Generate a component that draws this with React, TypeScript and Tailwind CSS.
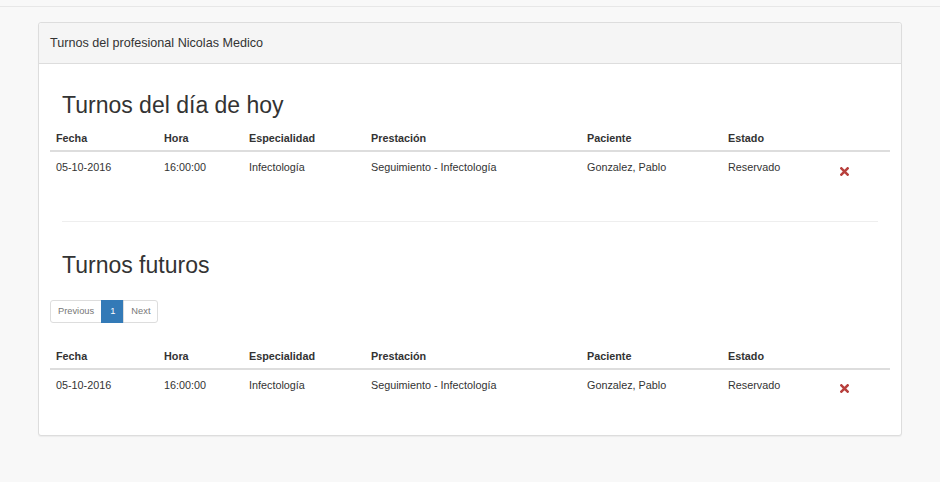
import React from "react";

const FONT = { fontFamily: '"Liberation Sans", Arial, Helvetica, sans-serif' };

function RemoveIcon() {
  return (
    <svg width="9" height="9" viewBox="0 0 10 10" className="inline-block">
      <path d="M1.5 1.5 L8.5 8.5 M8.5 1.5 L1.5 8.5" stroke="#b8403d" strokeWidth="2.8" strokeLinecap="square" fill="none" />
    </svg>
  );
}

const headers = ["Fecha", "Hora", "Especialidad", "Prestación", "Paciente", "Estado", ""];
const row = ["05-10-2016", "16:00:00", "Infectología", "Seguimiento - Infectología", "Gonzalez, Pablo", "Reservado"];

function TurnosTable({ className = "" }: { className?: string }) {
  return (
    <table className={`w-[840px] table-fixed border-collapse text-[10.8px] leading-[15px] text-[#333] ${className}`}>
      <colgroup>
        <col className="w-[108px]" />
        <col className="w-[85px]" />
        <col className="w-[122px]" />
        <col className="w-[216px]" />
        <col className="w-[141px]" />
        <col className="w-[112px]" />
        <col className="w-[56px]" />
      </colgroup>
      <thead>
        <tr>
          {headers.map((h, i) => (
            <th key={i} className="h-[27px] border-b-2 border-[#ddd] pl-[6px] pr-[6px] text-left align-bottom pb-[4px] font-bold">
              {h}
            </th>
          ))}
        </tr>
      </thead>
      <tbody>
        <tr>
          {row.map((c, i) => (
            <td key={i} className="pl-[6px] pr-[6px] pt-[8px] pb-[4px] align-top whitespace-nowrap">
              {c}
            </td>
          ))}
          <td className="pl-[6px] pt-[13px] pb-[4px] align-top leading-none">
            <RemoveIcon />
          </td>
        </tr>
      </tbody>
    </table>
  );
}

export default function App() {
  return (
    <div className="min-h-[482px] w-full bg-[#f8f8f8]" style={FONT}>
      <div className="h-[7px] border-b border-[#e7e7e7] bg-[#f8f8f8]" />
      <div className="pl-[38px] pt-[15px]">
        <div className="w-[864px] rounded-[3px] border border-[#dddddd] bg-white shadow-[0_1px_1px_rgba(0,0,0,0.05)]">
          <div className="flex h-[41px] items-center rounded-t-[3px] border-b border-[#dddddd] bg-[#f5f5f5] pl-[11px] pt-[1px] text-[12.6px] text-[#333]">
            Turnos del profesional Nicolas Medico
          </div>
          <div className="px-[11px] pb-[37px] pt-[28px]">
            <h2 className="pl-[12px] text-[23px] leading-[26px] font-normal text-[#333]">Turnos del día de hoy</h2>
            <TurnosTable className="mt-[6px]" />
            <hr className="mx-[12px] mt-[41px] border-0 border-t border-[#eeeeee]" />
            <h2 className="mt-[30px] pl-[12px] text-[23px] leading-[26px] font-normal text-[#333]">Turnos futuros</h2>
            <div className="mt-[22px] flex text-[9.3px] leading-[14px]">
              <span className="rounded-l-[3px] border border-[#ddd] bg-white px-[7px] py-[3.5px] text-[#777]">Previous</span>
              <span className="-ml-px border border-[#337ab7] bg-[#337ab7] px-[8px] py-[3.5px] text-white">1</span>
              <span className="-ml-px rounded-r-[3px] border border-[#ddd] bg-white px-[7px] py-[3.5px] text-[#777]">Next</span>
            </div>
            <TurnosTable className="mt-[19px]" />
          </div>
        </div>
      </div>
    </div>
  );
}
